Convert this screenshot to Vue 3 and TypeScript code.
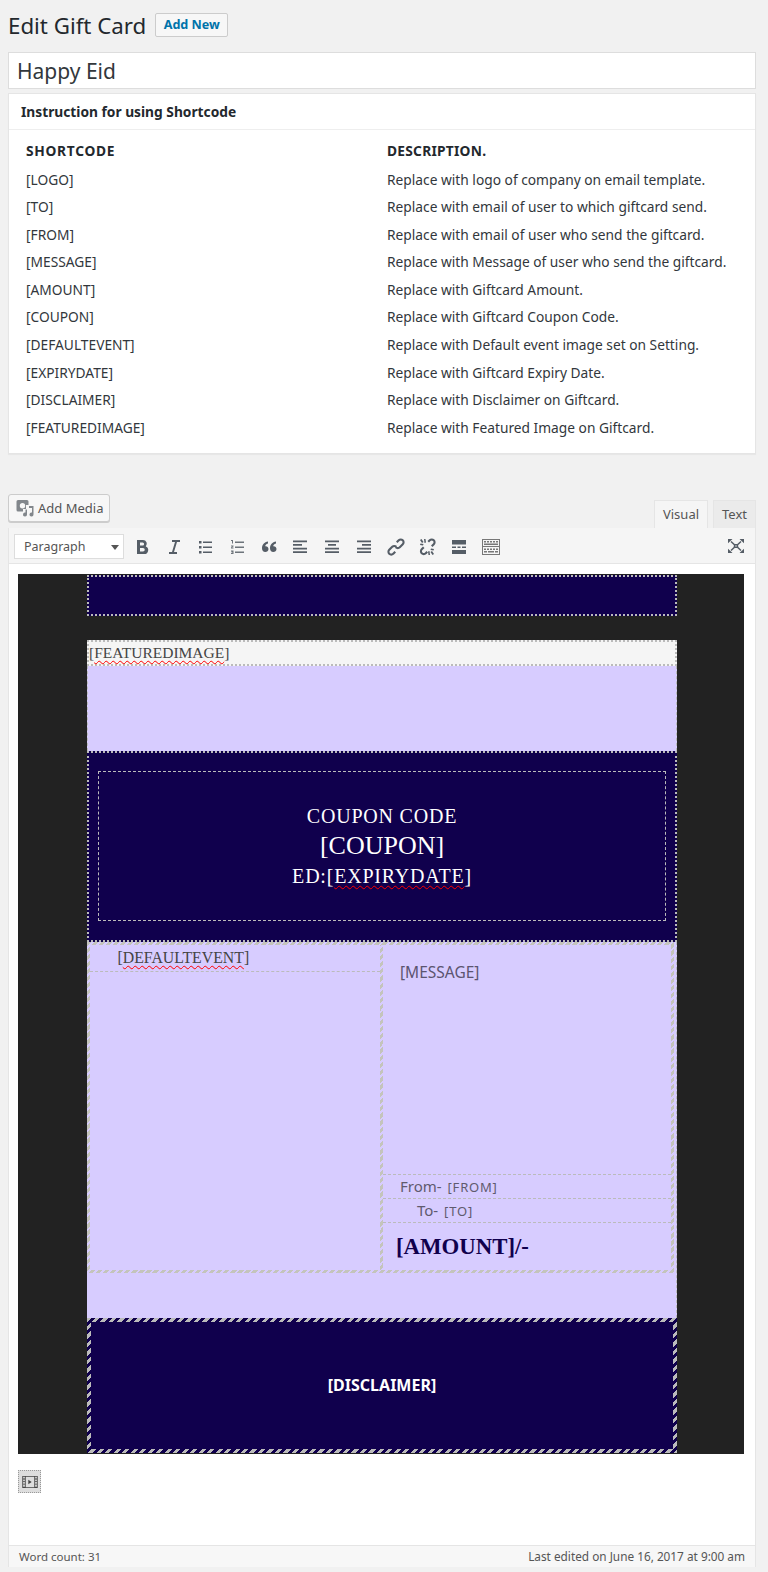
<script setup lang="ts">
const shortcodes: [string, string][] = [
  ['[LOGO]', 'Replace with logo of company on email template.'],
  ['[TO]', 'Replace with email of user to which giftcard send.'],
  ['[FROM]', 'Replace with email of user who send the giftcard.'],
  ['[MESSAGE]', 'Replace with Message of user who send the giftcard.'],
  ['[AMOUNT]', 'Replace with Giftcard Amount.'],
  ['[COUPON]', 'Replace with Giftcard Coupon Code.'],
  ['[DEFAULTEVENT]', 'Replace with Default event image set on Setting.'],
  ['[EXPIRYDATE]', 'Replace with Giftcard Expiry Date.'],
  ['[DISCLAIMER]', 'Replace with Disclaimer on Giftcard.'],
  ['[FEATUREDIMAGE]', 'Replace with Featured Image on Giftcard.'],
]
</script>

<template>
  <div class="page">
    <header class="heading">
      <h1>Edit Gift Card</h1>
      <a class="add-new">Add New</a>
    </header>
    <div class="title-input">Happy Eid</div>

    <section class="card">
      <h2>Instruction for using Shortcode</h2>
      <div class="codes">
        <div class="code-row head">
          <span>SHORTCODE</span>
          <span>DESCRIPTION.</span>
        </div>
        <div v-for="row in shortcodes" :key="row[0]" class="code-row">
          <span>{{ row[0] }}</span>
          <span>{{ row[1] }}</span>
        </div>
      </div>
    </section>

    <div class="editor-top">
      <button class="add-media">
        <svg width="18" height="18" viewBox="0 0 18 18" fill="#82878c">
          <path fill-rule="evenodd" d="M2 1h9a1.500 1.500 0 0 1 1.500 1.500V6H10v4H7v2.500H2A1.500 1.500 0 0 1 .5 11V2.500A1.500 1.500 0 0 1 2 1zm4.500 3a2.700 2.700 0 1 0 0 5.400 2.700 2.700 0 0 0 0-5.400z" />
          <path d="M13 7h4.500v8.500a2 2 0 1 1-1.500-1.900V9H13z" />
          <path d="M11 10.500v5a2 2 0 1 1-1.500-1.900v-3.100z" />
        </svg>
        Add Media
      </button>
      <div class="tabs">
        <span class="tab active">Visual</span>
        <span class="tab">Text</span>
      </div>
    </div>

    <div class="editor">
      <div class="toolbar">
        <div class="format">Paragraph<i class="caret" /></div>
        <svg class="tool" viewBox="0 0 20 20"><path fill-rule="evenodd" d="M5 3h6a3.800 3.800 0 0 1 2.800 6.400A4 4 0 0 1 11.500 17H5zm3 2.500v3h2.600a1.500 1.500 0 0 0 0-3zm0 5.500v3.500h3a1.750 1.750 0 0 0 0-3.500z" /></svg>
        <svg class="tool" viewBox="0 0 20 20"><path d="M8 3h8v2h-3l-3 10h3v2H5v-2h3l3-10H8z" /></svg>
        <svg class="tool" viewBox="0 0 20 20"><path d="M4 4h2.500v2.500H4zm4 .5h9V6H8zM4 9h2.500v2.500H4zm4 .5h9V11H8zM4 14h2.500v2.500H4zm4 .5h9V16H8z" /></svg>
        <svg class="tool num" viewBox="0 0 20 20"><path d="M4 3h2v3.500H5V4H4zm4 1.500h9V6H8zM4 8.500h2.500v1l-1.500 1h1.500v1H4v-1l1.500-1H4zm4 1h9V11H8zM4 13.500h2.500V17H4v-1h1.500v-.5H4.500v-1h1V14.500H4zm4 1h9V16H8z" /></svg>
        <svg class="tool" viewBox="0 0 20 20"><path d="M9 4.500v2C7 7 6.300 8.200 6.200 9.300 8 9 9.500 10.300 9.500 12S8 15 6.300 15C4.300 15 3 13.500 3 11.200c0-3.500 2.300-6.200 6-6.700zm8 0v2c-2 .5-2.700 1.700-2.800 2.800C16 9 17.500 10.300 17.500 12s-1.500 3-3.200 3c-2 0-3.300-1.500-3.300-3.800 0-3.500 2.300-6.200 6-6.700z" /></svg>
        <svg class="tool" viewBox="0 0 20 20"><path d="M3 3.500h14v1.700H3zm0 3.600h9v1.700H3zm0 3.600h14v1.700H3zm0 3.600h14V16H3z" /></svg>
        <svg class="tool" viewBox="0 0 20 20"><path d="M3 3.500h14v1.700H3zm3 3.600h8v1.700H6zm-3 3.600h14v1.700H3zm0 3.600h14V16H3z" /></svg>
        <svg class="tool" viewBox="0 0 20 20"><path d="M3 3.500h14v1.700H3zm5 3.600h9v1.700H8zm-5 3.600h14v1.700H3zm0 3.600h14V16H3z" /></svg>
        <svg class="tool" viewBox="0 0 20 20"><path d="M17.500 2.500c-1.500-1.500-4-1.500-5.500 0l-2 2 1.500 1.500 2-2c.7-.7 1.800-.7 2.500 0s.7 1.800 0 2.500l-3 3c-.7.7-1.800.7-2.500 0l-1.500 1.500c1.500 1.500 4 1.500 5.500 0l3-3c1.500-1.500 1.500-4 0-5.500zM8.500 14l-2 2c-.7.7-1.800.7-2.500 0s-.7-1.800 0-2.500l3-3c.7-.7 1.800-.7 2.500 0L11 9c-1.500-1.500-4-1.500-5.500 0l-3 3c-1.500 1.500-1.500 4 0 5.500s4 1.500 5.500 0l2-2z" /></svg>
        <svg class="tool" viewBox="0 0 20 20"><path d="M17.500 2.500c-1.500-1.500-4-1.500-5.500 0L10.500 4 12 5.500 13.500 4c.7-.7 1.800-.7 2.500 0s.7 1.800 0 2.500L14 8.500l1.500 1.500 2-2c1.500-1.500 1.500-4 0-5.500zM6 9.500l-2 2c-1.500 1.500-1.500 4 0 5.500s4 1.500 5.500 0l1.500-1.500L9.500 14 8 15.500c-.7.7-1.800.7-2.500 0s-.7-1.800 0-2.500l2-2zM3 3l1.500-1 2 3L5 6zm0 5 .5-1.500 3 .5-.5 1.500zm4-6h1.500L9 5.500 7.500 6zm10 15-1.500 1-2-3 1.500-1zm0-5-.5 1.500-3-.5.5-1.500zm-4 6h-1.500L11 14.500l1.500-.5z" /></svg>
        <svg class="tool" viewBox="0 0 20 20"><path d="M3 3h14v4.500H3zm0 6.500h4v1.500H3zm5.500 0h3V11h-3zm4.500 0h4V11h-4zM3 13h14v4H3z" /></svg>
        <svg class="tool wide" viewBox="0 0 20 20"><path fill-rule="evenodd" d="M1 2h18v16H1zm1 1v6h16V3zm0 7v7h16v-7zM3 4h2v1.500H3zm3 0h2v1.500H6zm3 0h2v1.500H9zm3 0h2v1.500h-2zm3 0h2v1.500h-2zM3 6.500h14V8H3zm0 5h2V13H3zm3 0h2V13H6zm3 0h2V13H9zm3 0h2V13h-2zm3 0h2V13h-2zM3 14h3v1.500H3zm4 0h6v1.500H7zm7 0h3v1.500h-3z" /></svg>
        <svg class="tool full" viewBox="0 0 20 20">
          <path d="M5 5.500 8.500 8.700h3L15 5.500M5 14.500l3.500-3.200h3l3.500 3.200M8.500 8.700v2.600M11.500 8.700v2.600" fill="none" stroke="#555d66" stroke-width="1.500" />
          <path d="M2 3h4.500L2 7.200zm16 0h-4.500L18 7.200zM2 17h4.500L2 12.800zm16 0h-4.500l4.500-4.200z" />
        </svg>
      </div>

      <div class="content">
        <div class="mail">
          <div class="band-top" />

          <div class="feature">
            <div class="feature-tag">[<span class="misspelt">FEATUREDIMAGE</span>]</div>
            <div class="feature-img" />
          </div>

          <div class="coupon">
            <div class="coupon-inner">
              <p class="coupon-label">COUPON CODE</p>
              <p class="coupon-code">[COUPON]</p>
              <p class="coupon-label">ED:[<span class="misspelt">EXPIRYDATE</span>]</p>
            </div>
          </div>

          <div class="body-block">
            <div class="columns">
              <div class="col-left">
                <div class="event">[<span class="misspelt">DEFAULTEVENT</span>]</div>
              </div>
              <div class="col-right">
                <div class="message">[MESSAGE]</div>
                <div class="sign from">From- <small>[FROM]</small></div>
                <div class="sign to">To- <small>[TO]</small></div>
                <div class="amount">[AMOUNT]/-</div>
              </div>
            </div>
          </div>

          <div class="disclaimer">[DISCLAIMER]</div>
        </div>

        <div class="media-mark">
          <svg width="16" height="12" viewBox="0 0 18 14">
            <path fill="#444" fill-rule="evenodd" d="M0 0h18v14H0zm1 1v2h2V1zm0 3v2h2V4zm0 3v2h2V7zm0 3v2.500h2V10zM15 1v2h2V1zm0 3v2h2V4zm0 3v2h2V7zm0 3v2.500h2V10zM4 1v12h10V1z" />
            <path fill="#444" d="M7 4.500 11 7l-4 2.500z" />
          </svg>
        </div>
      </div>

      <footer class="status">
        <span>Word count: 31</span>
        <span>Last edited on June 16, 2017 at 9:00 am</span>
      </footer>
    </div>
  </div>
</template>

<style scoped>
.page {
  box-sizing: border-box;
  width: 768px;
  height: 1572px;
  padding: 0 12px 0 8px;
  background: #f1f1f1;
  color: #444;
  font-family: "Noto Sans", "Open Sans", sans-serif;
  font-size: 13px;
  overflow: hidden;
}
.heading {
  display: flex;
  align-items: center;
  gap: 9px;
  height: 52px;
  padding-bottom: 2px;
  box-sizing: border-box;
}
h1 {
  margin: 0;
  font-size: 22.3px;
  font-weight: 400;
  color: #23282d;
}
.add-new {
  box-sizing: border-box;
  width: 73px;
  height: 24px;
  border: 1px solid #ccc;
  border-radius: 2px;
  background: #f7f7f7;
  color: #0073aa;
  font-size: 12.6px;
  font-weight: 700;
  line-height: 22px;
  text-align: center;
}
.title-input {
  box-sizing: border-box;
  height: 37px;
  padding-left: 8px;
  border: 1px solid #ddd;
  background: #fff;
  color: #32373c;
  font-size: 21px;
  line-height: 36px;
}
.card {
  box-sizing: border-box;
  height: 361px;
  margin-top: 4px;
  border: 1px solid #e5e5e5;
  background: #fff;
  box-shadow: 0 1px 1px rgba(0, 0, 0, 0.04);
}
h2 {
  box-sizing: border-box;
  height: 36px;
  margin: 0;
  padding-left: 12px;
  border-bottom: 1px solid #eee;
  color: #23282d;
  font-size: 13.75px;
  font-weight: 700;
  line-height: 35px;
}
.codes {
  padding: 7px 0 0 17px;
}
.code-row {
  display: grid;
  grid-template-columns: 361px 1fr;
  height: 27.6px;
  color: #32373c;
  font-size: 13.75px;
  line-height: 27.6px;
}
.code-row.head {
  height: 28.5px;
  color: #23282d;
  font-weight: 700;
  letter-spacing: 0.25px;
}
.code-row.head span:first-child {
  letter-spacing: 0.7px;
}
.editor-top {
  display: flex;
  justify-content: space-between;
  align-items: flex-end;
  height: 36px;
  margin-top: 38px;
}
.add-media {
  display: flex;
  align-items: center;
  gap: 4px;
  box-sizing: border-box;
  width: 102px;
  height: 28px;
  margin-bottom: 6px;
  padding: 0 0 0 7px;
  border: 1px solid #ccc;
  border-radius: 3px;
  background: #f7f7f7;
  box-shadow: 0 1px 0 #ccc;
  color: #555;
  font-family: inherit;
  font-size: 13px;
}
.tabs {
  display: flex;
  gap: 5px;
}
.tab {
  box-sizing: border-box;
  height: 28px;
  padding: 0 8px;
  border: 1px solid #e5e5e5;
  border-bottom: 0;
  background: #ebebeb;
  color: #555;
  line-height: 27px;
}
.tab.active {
  background: #f5f5f5;
}
.editor {
  box-sizing: border-box;
  height: 1039px;
  border: 1px solid #e5e5e5;
  border-top: 0;
  background: #fff;
}
.toolbar {
  position: relative;
  display: flex;
  align-items: center;
  box-sizing: border-box;
  height: 36px;
  padding: 2px 0 0 5px;
  border-bottom: 1px solid #e5e5e5;
  background: #f5f5f5;
}
.format {
  position: relative;
  box-sizing: border-box;
  width: 110px;
  height: 25px;
  margin-right: 8px;
  padding-left: 9px;
  border: 1px solid #ddd;
  background: #fff;
  color: #555;
  font-size: 12.5px;
  line-height: 23px;
}
.caret {
  position: absolute;
  top: 10px;
  right: 4px;
  border: 4px solid transparent;
  border-top: 5px solid #555;
  border-bottom: 0;
}
.tool {
  flex: none;
  width: 20px;
  height: 20px;
  margin-right: 11.7px;
  fill: #555d66;
}
.tool.num {
  fill: #6d747b;
}
.tool.wide {
  fill: #777;
}
.tool.full {
  position: absolute;
  top: 8px;
  right: 0;
  margin-right: 9px;
}
.content {
  box-sizing: border-box;
  height: 981px;
  padding: 10px 11px 0 9px;
}
.mail {
  display: flex;
  flex-direction: column;
  height: 879px;
  padding: 1px 67px 0 69px;
  background: #222;
}
.band-top {
  box-sizing: border-box;
  height: 41px;
  border: 2px dotted #bbb;
  background: #10004d;
}
.feature {
  margin-top: 24px;
}
.feature-tag {
  box-sizing: border-box;
  height: 26px;
  border: 2px dotted #bbb;
  background: #f5f5f5;
  color: #444;
  font-family: "Liberation Serif", serif;
  font-size: 15.5px;
  line-height: 22px;
}
.misspelt {
  text-decoration: underline wavy #f00 1px;
  text-underline-offset: 2px;
}
.feature-img {
  box-sizing: border-box;
  height: 85px;
  border: 1px dashed #bbb;
  border-width: 0 1px;
  background: #d7ccff;
}
.coupon {
  box-sizing: border-box;
  height: 191px;
  padding: 18px 9px;
  border: 2px dotted #bbb;
  background: #10004d;
}
.coupon-inner {
  box-sizing: border-box;
  height: 150px;
  padding-top: 32px;
  border: 1px dashed #bbb;
  color: #fff;
  font-family: "Liberation Serif", serif;
  text-align: center;
}
.coupon-inner p {
  margin: 0;
}
.coupon-label {
  font-size: 20px;
  line-height: 24px;
  letter-spacing: 0.8px;
}
.coupon-code {
  font-size: 26px;
  line-height: 36px;
}
.body-block {
  box-sizing: border-box;
  height: 376px;
  border-right: 1px dashed #bbb;
  background: #d7ccff;
}
.columns {
  display: grid;
  grid-template-columns: 293px 1fr;
  box-sizing: border-box;
  height: 331px;
  margin-right: 2px;
  border: 3px solid;
  border-image: repeating-linear-gradient(135deg, #c4c4bc 0 3px, transparent 3px 5px) 3;
}
.col-left {
  border-right: 3px solid;
  border-image: repeating-linear-gradient(135deg, #c4c4bc 0 3px, transparent 3px 5px) 3;
}
.event {
  box-sizing: border-box;
  height: 27px;
  padding-left: 27.5px;
  border-bottom: 1px dashed #bbb;
  color: #444;
  font-family: "Liberation Serif", serif;
  font-size: 15.8px;
  line-height: 26px;
}
.col-right {
  display: flex;
  flex-direction: column;
}
.message {
  box-sizing: border-box;
  height: 230px;
  padding: 17px 0 0 17px;
  border-bottom: 1px dashed #bbb;
  color: #5b5470;
  font-size: 15.5px;
  line-height: 20px;
}
.sign {
  box-sizing: border-box;
  height: 24px;
  border-bottom: 1px dashed #bbb;
  color: #5f5a6e;
  font-size: 15px;
  line-height: 22px;
}
.sign small {
  margin-left: 2px;
  font-size: 13px;
  letter-spacing: 0.8px;
}
.from {
  padding-left: 17px;
}
.to {
  padding-left: 34px;
}
.amount {
  padding: 11px 0 0 13px;
  color: #10004d;
  font-family: "Liberation Serif", serif;
  font-size: 22.8px;
  font-weight: 700;
  line-height: 26px;
}
.disclaimer {
  box-sizing: border-box;
  height: 135px;
  border: 4px solid;
  border-image: repeating-linear-gradient(135deg, #bbb 0 3px, transparent 3px 6px) 4;
  background: #10004d;
  color: #fff;
  font-size: 16px;
  font-weight: 700;
  line-height: 127px;
  text-align: center;
}
.media-mark {
  display: flex;
  align-items: center;
  justify-content: center;
  box-sizing: border-box;
  width: 23px;
  height: 23px;
  margin-top: 16px;
  border: 1px dotted #999;
  background: #ddd;
}
.status {
  display: flex;
  justify-content: space-between;
  box-sizing: border-box;
  height: 22px;
  padding: 0 10px 0 10px;
  border-top: 1px solid #e5e5e5;
  background: #f7f7f7;
  color: #555;
  font-size: 11.5px;
  line-height: 21px;
}
.status span:last-child {
  font-size: 11.8px;
}
</style>
